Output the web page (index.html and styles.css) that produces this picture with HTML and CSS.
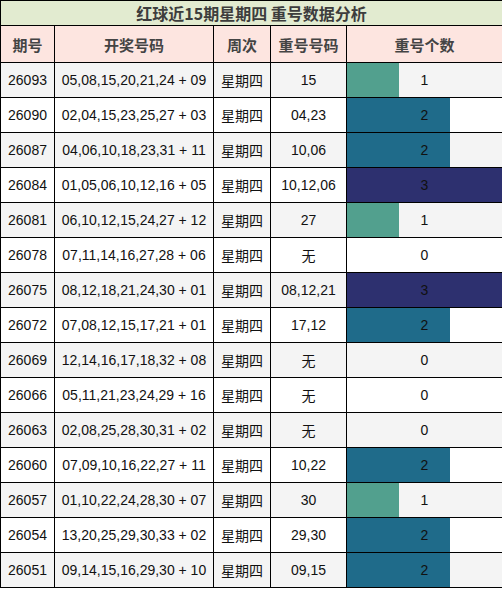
FILE: index.html
```html
<!DOCTYPE html>
<html lang="zh">
<head>
<meta charset="utf-8">
<link rel="stylesheet" href="styles.css">
</head>
<body>
<table class="grid">
  <colgroup>
    <col class="c-issue"><col class="c-draw"><col class="c-week"><col class="c-rep"><col class="c-count">
  </colgroup>
  <thead>
    <tr class="title-row"><th colspan="5">红球近15期星期四 重号数据分析</th></tr>
    <tr class="head-row"><th>期号</th><th>开奖号码</th><th>周次</th><th>重号号码</th><th>重号个数</th></tr>
  </thead>
  <tbody>
    <tr><td>26093</td><td>05,08,15,20,21,24 + 09</td><td class="cjk">星期四</td><td>15</td><td class="cnt"><div class="cell"><div class="bar b1" style="width:33.3%"></div><span>1</span></div></td></tr>
    <tr><td>26090</td><td>02,04,15,23,25,27 + 03</td><td class="cjk">星期四</td><td>04,23</td><td class="cnt"><div class="cell"><div class="bar b2" style="width:66.6%"></div><span>2</span></div></td></tr>
    <tr><td>26087</td><td>04,06,10,18,23,31 + 11</td><td class="cjk">星期四</td><td>10,06</td><td class="cnt"><div class="cell"><div class="bar b2" style="width:66.6%"></div><span>2</span></div></td></tr>
    <tr><td>26084</td><td>01,05,06,10,12,16 + 05</td><td class="cjk">星期四</td><td>10,12,06</td><td class="cnt"><div class="cell"><div class="bar b3" style="width:100%"></div><span>3</span></div></td></tr>
    <tr><td>26081</td><td>06,10,12,15,24,27 + 12</td><td class="cjk">星期四</td><td>27</td><td class="cnt"><div class="cell"><div class="bar b1" style="width:33.3%"></div><span>1</span></div></td></tr>
    <tr><td>26078</td><td>07,11,14,16,27,28 + 06</td><td class="cjk">星期四</td><td class="cjk">无</td><td class="cnt"><div class="cell"><span>0</span></div></td></tr>
    <tr><td>26075</td><td>08,12,18,21,24,30 + 01</td><td class="cjk">星期四</td><td>08,12,21</td><td class="cnt"><div class="cell"><div class="bar b3" style="width:100%"></div><span>3</span></div></td></tr>
    <tr><td>26072</td><td>07,08,12,15,17,21 + 01</td><td class="cjk">星期四</td><td>17,12</td><td class="cnt"><div class="cell"><div class="bar b2" style="width:66.6%"></div><span>2</span></div></td></tr>
    <tr><td>26069</td><td>12,14,16,17,18,32 + 08</td><td class="cjk">星期四</td><td class="cjk">无</td><td class="cnt"><div class="cell"><span>0</span></div></td></tr>
    <tr><td>26066</td><td>05,11,21,23,24,29 + 16</td><td class="cjk">星期四</td><td class="cjk">无</td><td class="cnt"><div class="cell"><span>0</span></div></td></tr>
    <tr><td>26063</td><td>02,08,25,28,30,31 + 02</td><td class="cjk">星期四</td><td class="cjk">无</td><td class="cnt"><div class="cell"><span>0</span></div></td></tr>
    <tr><td>26060</td><td>07,09,10,16,22,27 + 11</td><td class="cjk">星期四</td><td>10,22</td><td class="cnt"><div class="cell"><div class="bar b2" style="width:66.6%"></div><span>2</span></div></td></tr>
    <tr><td>26057</td><td>01,10,22,24,28,30 + 07</td><td class="cjk">星期四</td><td>30</td><td class="cnt"><div class="cell"><div class="bar b1" style="width:33.3%"></div><span>1</span></div></td></tr>
    <tr><td>26054</td><td>13,20,25,29,30,33 + 02</td><td class="cjk">星期四</td><td>29,30</td><td class="cnt"><div class="cell"><div class="bar b2" style="width:66.6%"></div><span>2</span></div></td></tr>
    <tr><td>26051</td><td>09,14,15,16,29,30 + 10</td><td class="cjk">星期四</td><td>09,15</td><td class="cnt"><div class="cell"><div class="bar b2" style="width:66.6%"></div><span>2</span></div></td></tr>
  </tbody>
</table>
</body>
</html>
```
FILE: styles.css
```css
html, body {
  margin: 0;
  padding: 0;
  background: #ffffff;
}
.grid {
  border-collapse: collapse;
  table-layout: fixed;
  width: 502px;
  font-family: "Liberation Sans", "Noto Sans CJK SC", sans-serif;
  font-size: 14px;
  color: #111;
}
.c-issue { width: 54px; }
.c-draw { width: 159px; }
.c-week { width: 57px; }
.c-rep { width: 76px; }
.c-count { width: 156px; }
.grid th, .grid td {
  border: 1px solid #000;
  padding: 0;
  text-align: center;
}
.title-row th {
  height: 24px;
  background: #e2ebd0;
  color: #3d3d3d;
  font-family: "Noto Sans CJK SC", sans-serif;
  font-weight: bold;
  font-size: 16px;
  line-height: 24px;
}
.head-row th {
  height: 36px;
  background: #fde5e0;
  color: #444;
  font-family: "Noto Sans CJK SC", sans-serif;
  font-weight: bold;
  font-size: 15px;
}
.grid td {
  height: 34px;
}
.cjk {
  font-family: "Noto Sans CJK SC", sans-serif;
}
tbody tr:nth-child(odd) td {
  background: #f4f4f4;
}
tbody tr:nth-child(even) td {
  background: #ffffff;
}
.cnt {
  vertical-align: top;
}
.cell {
  display: grid;
  height: 34px;
}
.cell > * {
  grid-area: 1 / 1;
}
.bar {
  height: 34px;
  justify-self: start;
}
.cell span {
  align-self: center;
  justify-self: center;
  line-height: 34px;
}
.b1 { background: #52a08e; }
.b2 { background: #1f6b8a; }
.b3 { background: #2d306f; }
```
